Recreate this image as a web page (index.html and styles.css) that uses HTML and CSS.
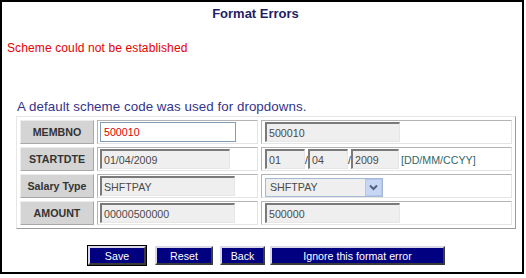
FILE: index.html
```html
<!DOCTYPE html>
<html>
<head>
<meta charset="utf-8">
<title>Format Errors</title>
<link rel="stylesheet" href="styles.css">
</head>
<body>
<div class="frame">
  <div class="title">Format Errors</div>
  <div class="error">Scheme could not be established</div>
  <div class="note">A default scheme code was used for dropdowns.</div>
  <div class="grid">
    <div class="cell label">MEMBNO</div>
    <div class="cell"><input class="field edit w-136" value="500010"></div>
    <div class="cell cell-right"><input class="field ro w-135" value="500010" readonly></div>

    <div class="cell label">STARTDTE</div>
    <div class="cell"><input class="field ro w-130" value="01/04/2009" readonly></div>
    <div class="cell cell-right">
      <input class="field ro w-40" value="01" readonly><span class="slash">/</span><input class="field ro w-40" value="04" readonly><span class="slash">/</span><input class="field ro w-48" value="2009" readonly><span class="hint">[DD/MM/CCYY]</span>
    </div>

    <div class="cell label">Salary Type</div>
    <div class="cell"><input class="field ro w-135" value="SHFTPAY" readonly></div>
    <div class="cell cell-right">
      <div class="select w-118"><span class="select-value">SHFTPAY</span><span class="select-arrow"><svg width="9" height="7" viewBox="0 0 9 7"><path d="M1 1.5 L4.5 5 L8 1.5" fill="none" stroke="#4d6185" stroke-width="2"/></svg></span></div>
    </div>

    <div class="cell label">AMOUNT</div>
    <div class="cell"><input class="field ro w-135" value="00000500000" readonly></div>
    <div class="cell cell-right"><input class="field ro w-135" value="500000" readonly></div>
  </div>
  <div class="actions">
    <button class="btn btn-default w-save">Save</button>
    <button class="btn w-reset">Reset</button>
    <button class="btn w-back">Back</button>
    <button class="btn w-ignore">Ignore this format error</button>
  </div>
</div>
</body>
</html>
```
FILE: styles.css
```css
* { box-sizing: border-box; }
html, body { margin: 0; padding: 0; background: #fff; }
body { font-family: "Liberation Sans", Arial, sans-serif; }

.frame {
  width: 524px;
  height: 274px;
  border: 2px solid #000;
  display: flex;
  flex-direction: column;
}

.title {
  margin-top: 4px;
  text-align: center;
  font-size: 13px;
  font-weight: bold;
  line-height: 16px;
  color: #1e1e64;
  padding-right: 13px;
}

.error {
  margin-top: 19px;
  padding-left: 5px;
  font-size: 12px;
  line-height: 14px;
  color: #e60000;
  letter-spacing: 0.12px;
}

.note {
  margin-top: 44px;
  padding-left: 15px;
  font-size: 13.33px;
  line-height: 15px;
  color: #34348c;
  letter-spacing: 0.06px;
}

.grid {
  margin: 2px 0 0 14px;
  width: 500px;
  display: grid;
  grid-template-columns: 74px 161px 251px;
  grid-auto-rows: 24px;
  gap: 3px;
  padding: 3px;
  border: 1px solid;
  border-color: #e6e6e6 #9c9c9c #9c9c9c #e6e6e6;
}

.cell {
  border: 1px solid;
  border-color: #b4b4b4 #e4e4e4 #e4e4e4 #b4b4b4;
  padding: 0 2px;
  display: flex;
  align-items: center;
  background: #fff;
}
.cell-right { padding-left: 3px; align-items: baseline; padding-top: 1px; }

.label {
  justify-content: center;
  background: #d4d4d4;
  border-color: #ececec #a8a8a8 #a8a8a8 #ececec;
  font-size: 10.67px;
  font-weight: bold;
  color: #333;
}

.field {
  height: 20px;
  margin: 0;
  padding: 0 2px;
  font-family: "Liberation Sans", Arial, sans-serif;
  font-size: 10.67px;
  outline: none;
}
.edit {
  background: #fff;
  border: 1px solid #7f9db9;
  color: #e00000;
  padding-left: 3px;
}
.ro {
  background: #efefef;
  color: #4a4a4a;
  border-style: solid;
  border-width: 2px 1px 1px 2px;
  border-color: #7a7a7a #e6e6e6 #e6e6e6 #7a7a7a;
}

.w-136 { width: 136px; }
.w-135 { width: 135px; }
.w-130 { width: 130px; }
.w-40 { width: 40px; }
.w-48 { width: 48px; }
.w-118 { width: 118px; }

.slash {
  font-size: 10.67px;
  color: #333;
  width: 3px;
}
.hint {
  margin-left: 2px;
  font-size: 10.67px;
  color: #336666;
}

.select {
  height: 19px;
  margin-top: 1px;
  border: 1px solid #a5b9d6;
  background: #efefef;
  display: flex;
  align-items: center;
  font-size: 10.67px;
  color: #4a4a4a;
  align-self: center;
}
.select-value { flex: 1; padding-left: 4px; }
.select-arrow {
  width: 17px;
  height: 17px;
  background: #c8d6f6;
  border: 1px solid #b5c6ea;
  display: flex;
  align-items: center;
  justify-content: center;
}

.actions {
  margin-top: 17px;
  padding-left: 86px;
  display: flex;
  align-items: center;
}
.btn {
  height: 19px;
  padding: 0;
  margin: 0;
  background: #000080;
  color: #fff;
  font-family: "Liberation Sans", Arial, sans-serif;
  font-size: 10.67px;
  border: 2px solid;
  border-color: #d8d8e8 #3a3a3a #3a3a3a #d8d8e8;
  line-height: 14px;
}
.btn-default { outline: 1px solid #000; outline-offset: 0; }
.w-save { width: 58px; }
.w-reset { width: 58px; margin-left: 9px; }
.w-back { width: 45px; margin-left: 7px; }
.w-ignore { width: 175px; margin-left: 5px; }
```
